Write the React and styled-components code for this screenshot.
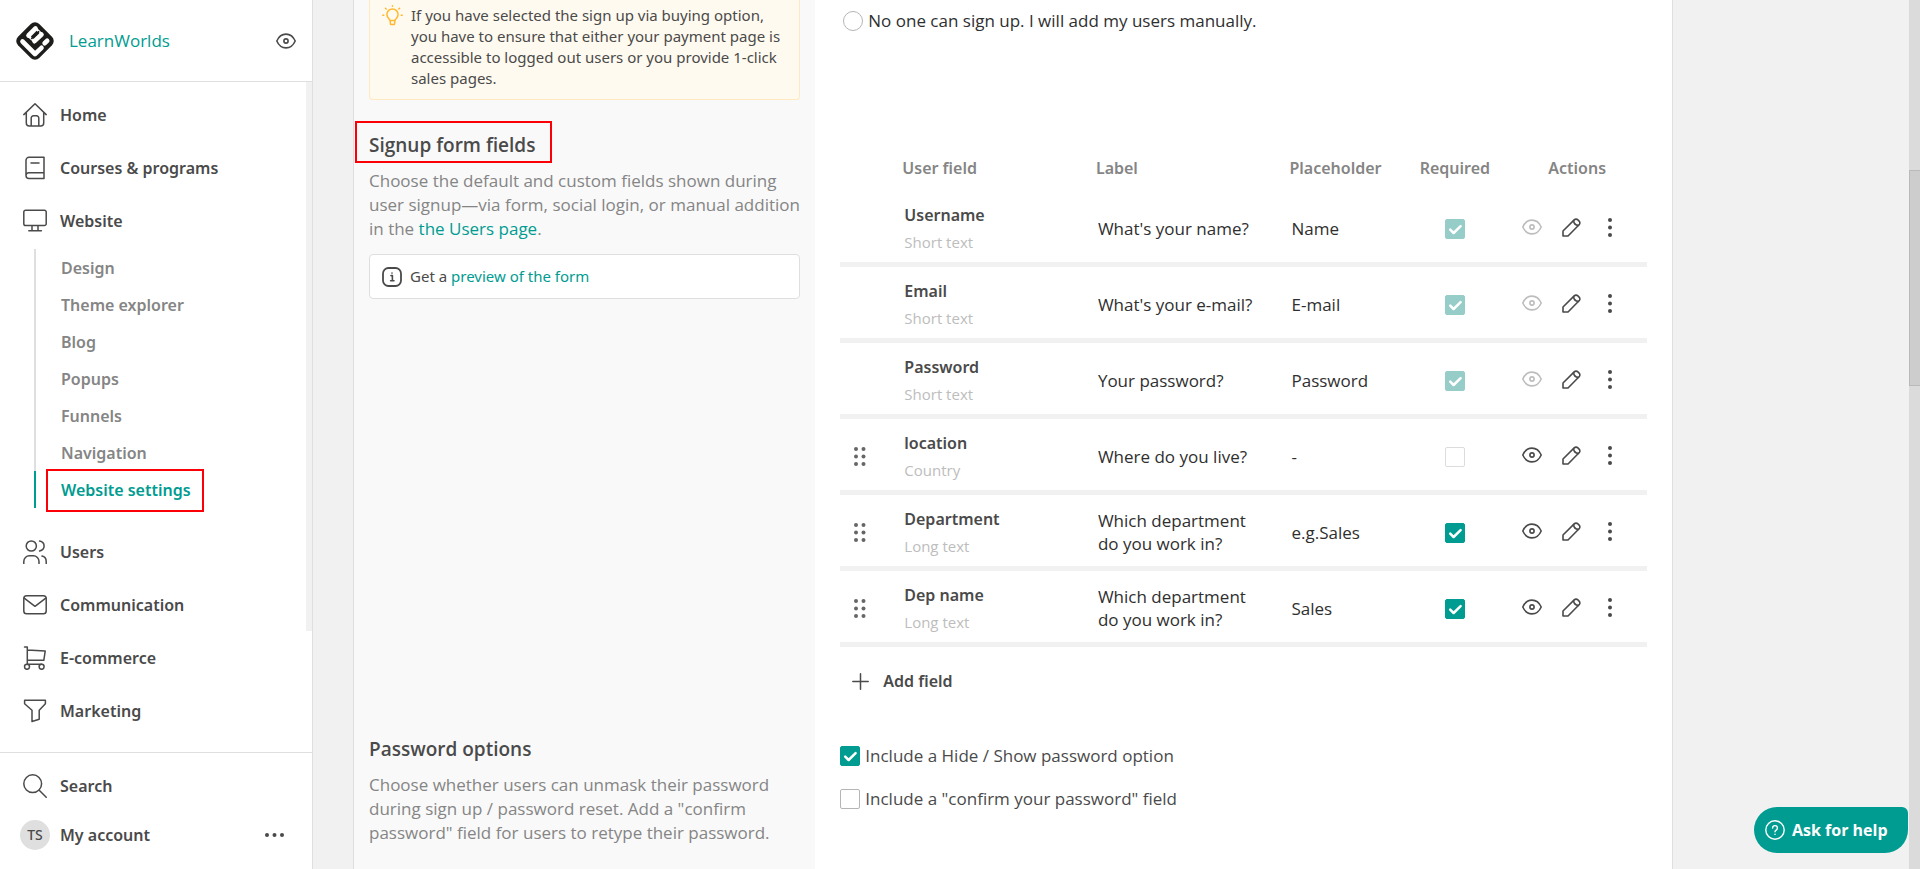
import React from "react";
import styled, { createGlobalStyle, css } from "styled-components";

const teal = "#009c91";
const ink = "#4a4a4a";
const line = "#dfdfdf";
const body = `"Open Sans", "Noto Sans", sans-serif`;
const wide = `"Noto Sans", "Open Sans", sans-serif`;

const Global = createGlobalStyle`
  *, *::before, *::after { box-sizing: border-box; }
  body {
    margin: 0;
    background: #f1f1f1;
    color: ${ink};
    font: 400 17px/24px ${body};
  }
  a { color: ${teal}; text-decoration: none; }
  button { font: inherit; color: inherit; background: none; border: 0; padding: 0; cursor: pointer; }
  h2, p, ul { margin: 0; padding: 0; }
  ul { list-style: none; }
  svg { display: block; flex: none; }
`;

const Shell = styled.div`
  display: flex;
  height: 100vh;
  overflow: hidden;
`;

/* Sidebar */
const Sidebar = styled.aside`
  flex: none;
  display: flex;
  flex-direction: column;
  width: 313px;
  background: #fff;
  border-right: 1px solid ${line};
  font-family: ${wide};
`;
const Brand = styled.header`
  flex: none;
  display: flex;
  align-items: center;
  gap: 14px;
  height: 82px;
  padding: 0 15px;
  border-bottom: 1px solid ${line};
`;
const BrandName = styled.a`
  flex: 1;
  font-family: ${body};
  font-weight: 500;
`;
const Nav = styled.nav`
  position: relative;
  flex: 1;
  min-height: 0;
  overflow: hidden;
  padding-top: 6px;
`;
const NavThumb = styled.span`
  position: absolute;
  top: 0;
  right: 0;
  width: 6px;
  height: 82%;
  background: #f1f1f1;
`;
const NavItem = styled.a`
  display: flex;
  align-items: center;
  gap: 13px;
  height: 53px;
  padding-left: 23px;
  color: ${ink};
  font-weight: 600;
  font-size: 16px;
`;
const SubNav = styled.ul`
  margin: 2px 0 17px 34px;
`;
const SubItem = styled.a`
  display: flex;
  align-items: center;
  height: 37px;
  padding-left: 25px;
  border-left: 2px solid ${(p) => (p.$active ? teal : line)};
  color: ${(p) => (p.$active ? teal : "#858585")};
  font-weight: 600;
  font-size: 16px;
`;
const Highlight = styled.span`
  position: relative;
  &::after {
    content: "";
    position: absolute;
    inset: ${(p) => p.$inset};
    border: 2px solid #fb0007;
    pointer-events: none;
  }
`;
const SideFooter = styled.footer`
  flex: none;
  display: flex;
  flex-direction: column;
  height: 117px;
  padding: 6px 0 12px;
  border-top: 1px solid ${line};
`;
const AccountRow = styled.div`
  display: flex;
  align-items: center;
  justify-content: space-between;
  height: 45px;
  padding: 0 28px 0 20px;
`;
const Account = styled.a`
  display: flex;
  align-items: center;
  gap: 10px;
  color: ${ink};
  font-weight: 600;
  font-size: 16px;
`;
const Avatar = styled.span`
  display: grid;
  place-items: center;
  width: 30px;
  height: 30px;
  border-radius: 50%;
  background: #dfdfdf;
  font-size: 14px;
  font-weight: 500;
`;

/* Content */
const Main = styled.main`
  flex: 1;
  min-width: 0;
  display: flex;
  padding: 0 40px;
`;
const Panel = styled.div`
  flex: 1;
  max-width: 1320px;
  display: flex;
  flex-direction: column;
  background: #fff;
  border: solid ${line};
  border-width: 0 1px;
`;
const Section = styled.section`
  display: flex;
  flex: ${(p) => (p.$last ? "1" : "none")};
`;
const Intro = styled.div`
  flex: none;
  width: 35%;
  padding: 0 15px 30px;
  background: #f9f9f9;
`;
const Body = styled.div`
  flex: 1;
  min-width: 0;
  padding: ${(p) => p.$top || 0}px 25px 0;
`;
const Notice = styled.div`
  display: flex;
  gap: 8px;
  padding: 0 10px 0 12px;
  border-radius: 4px;
  font-family: ${wide};
  font-size: 15px;
  line-height: 21px;
  ${(p) =>
    p.$warn
      ? css`
          padding-top: 5px;
          padding-bottom: 10px;
          background: #fffaf0;
          border: 1px solid #ffe9bf;
          border-top: 0;
          border-radius: 0 0 4px 4px;
        `
      : css`
          align-items: center;
          height: 45px;
          margin-top: 13px;
          background: #fff;
          border: 1px solid ${line};
        `}
`;
const Title = styled.h2`
  font-size: 19px;
  line-height: 30px;
  font-weight: 600;
`;
const Text = styled.p`
  margin-top: 9px;
  color: #858585;
`;

const Choice = styled.label`
  display: flex;
  align-items: center;
  gap: 5px;
  width: max-content;
  height: 24px;
  margin-bottom: 19px;
`;
const RadioChoice = styled(Choice)`
  margin-left: 3px;
  color: #2f2f2f;
`;
const Radio = styled.input`
  appearance: none;
  width: 20px;
  height: 20px;
  margin: 0;
  border: 1px solid #b5b5b5;
  border-radius: 50%;
  background: #fff;
`;
const CheckWrap = styled.span`
  display: inline-grid;
  width: 20px;
  height: 20px;
  > * { grid-area: 1 / 1; }
  > svg { pointer-events: none; z-index: 1; }
`;
const CheckInput = styled.input`
  --fill: ${(p) => (p.disabled ? "#97cdc9" : teal)};
  appearance: none;
  width: 20px;
  height: 20px;
  margin: 0;
  border: 1px solid ${(p) => (p.$pale ? "#dcdcdc" : "#b5b5b5")};
  border-radius: 2px;
  background: #fff;
  &:checked { background: var(--fill); border-color: var(--fill); }
  & + svg { visibility: hidden; }
  &:checked + svg { visibility: visible; }
`;

const Table = styled.table`
  width: 100%;
  table-layout: fixed;
  border-collapse: separate;
  border-spacing: 0;
`;
const Col = styled.col`
  width: ${(p) => p.$w};
`;
const Th = styled.th`
  height: 47px;
  padding: 0;
  text-align: ${(p) => (p.$center ? "center" : "left")};
  color: #858585;
  font-family: ${wide};
  font-weight: 600;
  font-size: 16px;
`;
const Td = styled.td`
  height: 76px;
  padding: ${(p) => (p.$center ? "3px 0 0" : "3px 24px 0 2px")};
  border-bottom: 5px solid #f1f1f1;
  text-align: ${(p) => (p.$center ? "center" : "left")};
  color: #2f2f2f;
  line-height: 23px;
  vertical-align: middle;
`;
const FieldName = styled.div`
  padding-top: 2px;
  color: ${ink};
  font-family: ${wide};
  font-weight: 600;
  font-size: 16px;
  line-height: 27px;
`;
const FieldType = styled.div`
  color: #bdbdbd;
  font-size: 15px;
  line-height: 27px;
`;
const Grip = styled.button`
  display: block;
  margin-left: 12px;
  color: #666;
`;
const CheckCell = styled.div`
  display: flex;
  justify-content: center;
  padding-top: 2px;
`;
const Actions = styled.div`
  display: flex;
  justify-content: center;
  gap: 16px;
  padding: 0 12px 2px 0;
  color: ${ink};
`;
const IconButton = styled.button`
  display: grid;
  place-items: center;
  width: 23px;
  height: 24px;
  color: ${(p) => (p.disabled ? "#bdbdbd" : ink)};
`;
const AddField = styled.button`
  display: flex;
  align-items: center;
  gap: 14px;
  height: 40px;
  margin: 14px 0 33px 12px;
  font-family: ${wide};
  font-weight: 600;
  font-size: 16px;
`;

const Scrollbar = styled.div`
  position: relative;
  flex: none;
  width: 11px;
  background: #dbdbdb;
  &::after {
    content: "";
    position: absolute;
    inset: 170px 0 auto;
    height: 216px;
    background: #cdcdcd;
    border: 1px solid #bababa;
    border-right: 0;
  }
`;
const Help = styled.button`
  position: fixed;
  right: 12px;
  bottom: 16px;
  display: flex;
  align-items: center;
  gap: 7px;
  width: 154px;
  height: 46px;
  padding-left: 11px;
  border-radius: 23px 6px 23px 23px;
  background: ${teal};
  color: #fff;
  font-weight: 700;
  font-size: 16px;
`;

/* Icons */
const Icon = ({ size = 24, w = 1.5, children, box = 24 }) => (
  <svg width={size} height={size} viewBox={`0 0 ${box} ${box}`} fill="none" stroke="currentColor"
    strokeWidth={w} strokeLinejoin="round" strokeLinecap="round" aria-hidden="true">{children}</svg>
);
const Logo = () => (
  <svg width="40" height="40" viewBox="0 0 40 40" fill="none" stroke="#fff" strokeLinecap="round" strokeLinejoin="round" aria-hidden="true">
    <rect x="5" y="5" width="30" height="30" rx="6" transform="rotate(45 20 20)" fill="#1d1d1b" stroke="none" />
    <path d="M7.500 20.500 20 33l6.500-6.200" strokeWidth="4.600" />
    <path d="M20.500 7.500 13.500 14.500M26.500 13.500 19.500 20.200" strokeWidth="4.600" />
    <path d="m21 7.500 6 6M13.500 15l6 5.500" strokeWidth="2.400" />
    <path d="m23.600 10.800-6.800 6.600" stroke="#1d1d1b" strokeWidth="1.800" />
    <path d="m29.600 22.200 2.600-2.400" strokeWidth="4.600" />
  </svg>
);
const Eye = () => (
  <svg width="20" height="16" viewBox="0 0 20 16" fill="none" stroke="currentColor" strokeWidth="1.600" aria-hidden="true">
    <path d="M.8 8C2.800 3.500 6 1.100 10 1.100S17.200 3.500 19.200 8C17.200 12.500 14 14.900 10 14.900S2.800 12.500.8 8Z" strokeLinejoin="round" />
    <circle cx="10" cy="8" r="2.100" />
  </svg>
);
const Pencil = () => (
  <Icon size={19} box={19} w={1.6}>
    <path d="M1 18v-5L12.200 1.900a2.600 2.600 0 0 1 3.700 0l1.200 1.200a2.600 2.600 0 0 1 0 3.700L6 18Z" />
    <path d="M11.600 2.600c.2 2.800 1.900 4.500 4.800 4.800" />
  </Icon>
);
const Dots = ({ points, width, height, r = 2 }) => (
  <svg width={width} height={height} fill="currentColor" aria-hidden="true">
    {points.map(([x, y]) => <circle key={`${x}-${y}`} cx={x} cy={y} r={r} />)}
  </svg>
);
const kebab = [[3, 2], [3, 9.5], [3, 17]];
const grip = [[4, 3], [11.5, 3], [4, 10.5], [11.5, 10.5], [4, 18], [11.5, 18]];
const meatballs = [[2, 2], [9.5, 2], [17, 2]];

const icons = {
  home: <Icon><path d="M.8 11.600 12 .8l11.200 10.800M3.300 9.400V20a3 3 0 0 0 3 3h11.400a3 3 0 0 0 3-3V9.400M8.200 23v-8a2.200 2.200 0 0 1 2.200-2.200h3.200a2.200 2.200 0 0 1 2.200 2.200v8" /></Icon>,
  courses: <Icon><path d="M21 1.300H6a3 3 0 0 0-3 3v15.200a3 3 0 0 0 3 3h15ZM3 19.500a2.800 2.800 0 0 1 3-2.700h15M8 7h8" /></Icon>,
  website: <Icon><path d="M2.600 1.300h18.800a1.800 1.800 0 0 1 1.800 1.800v11.600a1.800 1.800 0 0 1-1.800 1.800H2.600a1.800 1.800 0 0 1-1.800-1.800V3.100a1.800 1.800 0 0 1 1.800-1.800ZM9 16.500v4.800M15 16.500v4.800M5.800 21.800h12.600" /></Icon>,
  users: <Icon><circle cx="8.300" cy="6" r="5.100" /><path d="M.8 23.600v-2.200a5.600 5.600 0 0 1 5.600-5.600h4a5.600 5.600 0 0 1 5.600 5.600v2.200M16.600 1.100c6 1.400 6 8.400 0 9.900M19 16.100a5.500 5.500 0 0 1 4.200 5.300v2.200" /></Icon>,
  mail: <Icon><rect x=".8" y="2.800" width="22.400" height="18" rx="2.800" /><path d="M1.200 5.200 12 13.300l10.800-8.100" /></Icon>,
  cart: <Icon><path d="M1.500 1h2.800v17.200M4.300 3.900l17.900 1.200-1.400 9.200H4.300M4.300 18.200h14.500" /><circle cx="4" cy="20.800" r="2.500" /><circle cx="18.600" cy="20.800" r="2.500" /></Icon>,
  funnel: <Icon><path d="M1.600 1.300h20.800v3.400l-6.200 6.500v9l-7.200 2.300V11.200L1.600 4.700Z" /></Icon>,
  card: <Icon><rect x="3" y=".7" width="18" height="22" rx="2" /></Icon>,
  search: <Icon><circle cx="9.700" cy="9.700" r="8.900" /><path d="m16.200 16.200 7 7" /></Icon>,
};

const Check = ({ pale, ...rest }) => (
  <CheckWrap>
    <CheckInput type="checkbox" $pale={pale} {...rest} />
    <svg width="20" height="20" viewBox="0 0 20 20" fill="none" stroke="#fff" strokeWidth="2.500" strokeLinecap="round" strokeLinejoin="round" aria-hidden="true">
      <path d="m5.200 10.700 3.400 3.300 7-6.800" />
    </svg>
  </CheckWrap>
);

const topItems = [["Home", "home"], ["Courses & programs", "courses"], ["Website", "website"]];
const subItems = ["Design", "Theme explorer", "Blog", "Popups", "Funnels", "Navigation", "Website settings"];
const lowerItems = [["Users", "users"], ["Communication", "mail"], ["E-commerce", "cart"], ["Marketing", "funnel"], ["", "card"]];
const fields = [
  { name: "Username", type: "Short text", label: "What's your name?", placeholder: "Name", checked: true, locked: true },
  { name: "Email", type: "Short text", label: "What's your e-mail?", placeholder: "E-mail", checked: true, locked: true },
  { name: "Password", type: "Short text", label: "Your password?", placeholder: "Password", checked: true, locked: true },
  { name: "location", type: "Country", label: "Where do you live?", placeholder: "-", checked: false },
  { name: "Department", type: "Long text", label: "Which department do you work in?", placeholder: "e.g.Sales", checked: true },
  { name: "Dep name", type: "Long text", label: "Which department do you work in?", placeholder: "Sales", checked: true },
];

const FieldRow = ({ field: f }) => (
  <tr>
    <Td $center>
      {!f.locked && <Grip type="button" aria-label={`Move ${f.name}`}><Dots points={grip} width={16} height={21} /></Grip>}
    </Td>
    <Td><FieldName>{f.name}</FieldName><FieldType>{f.type}</FieldType></Td>
    <Td>{f.label}</Td>
    <Td>{f.placeholder}</Td>
    <Td $center>
      <CheckCell>
        <Check aria-label={`${f.name} required`} defaultChecked={f.checked} disabled={f.locked} pale />
      </CheckCell>
    </Td>
    <Td $center>
      <Actions>
        <IconButton type="button" disabled={f.locked} aria-label={`Show ${f.name}`}><Eye /></IconButton>
        <IconButton type="button" aria-label={`Edit ${f.name}`}><Pencil /></IconButton>
        <IconButton type="button" aria-label={`More for ${f.name}`}><Dots points={kebab} width={6} height={19} /></IconButton>
      </Actions>
    </Td>
  </tr>
);

export default function App() {
  return (
    <>
      <Global />
      <Shell>
        <Sidebar>
          <Brand>
            <Logo />
            <BrandName href="#">LearnWorlds</BrandName>
            <IconButton type="button" aria-label="Preview site"><Eye /></IconButton>
          </Brand>
          <Nav>
            {topItems.map(([t, i]) => <NavItem key={t} href="#">{icons[i]}{t}</NavItem>)}
            <SubNav>
              {subItems.map((t) => {
                const active = t === "Website settings";
                return (
                  <li key={t}>
                    <SubItem href="#" $active={active}>
                      {active ? <Highlight $inset="-9px -13px -10px -15px">{t}</Highlight> : t}
                    </SubItem>
                  </li>
                );
              })}
            </SubNav>
            {lowerItems.map(([t, i]) => <NavItem key={i} href="#" aria-label={t || "More"}>{icons[i]}{t}</NavItem>)}
            <NavThumb />
          </Nav>
          <SideFooter>
            <NavItem href="#">{icons.search}Search</NavItem>
            <AccountRow>
              <Account href="#"><Avatar>TS</Avatar>My account</Account>
              <button type="button" aria-label="Account menu"><Dots points={meatballs} width={19} height={4} /></button>
            </AccountRow>
          </SideFooter>
        </Sidebar>

        <Main>
          <Panel>
            <Section>
              <Intro>
                <Notice $warn>
                  <Icon size={21} box={21}>
                    <g stroke="#ffb92e">
                      <path d="M8 15.600c0-1.600-3.100-2.600-3.100-6A5.600 5.600 0 0 1 10.500 4a5.600 5.600 0 0 1 5.600 5.600c0 3.400-3.100 4.400-3.100 6ZM8 15.600l.6 3.900h3.800l.6-3.900M10.500.8v.4M3.400 3.200l.8.8M17.600 3.200l-.8.800M.8 10.200h1M19.200 10.200h1" />
                    </g>
                  </Icon>
                  <p>If you have selected the sign up via buying option, you have to ensure that either your payment page is accessible to logged out users or you provide 1-click sales pages.</p>
                </Notice>
              </Intro>
              <Body $top={9}>
                <RadioChoice>
                  <Radio type="radio" name="signup" />
                  No one can sign up. I will add my users manually.
                </RadioChoice>
              </Body>
            </Section>

            <Section>
              <Intro>
                <Title><Highlight $inset="-11px -17px -5px -14px">Signup form fields</Highlight></Title>
                <Text>
                  Choose the default and custom fields shown during user signup—via form, social login, or manual addition in the <a href="#">the Users page</a>.
                </Text>
                <Notice>
                  <Icon size={20} box={20} w={1.8}>
                    <rect x="1" y="1" width="18" height="18" rx="5.500" />
                    <path d="M9 8.600h1.400v5M8.600 13.800h3.400M10 6v.1" strokeWidth="1.600" />
                  </Icon>
                  <p>Get a <a href="#">preview of the form</a></p>
                </Notice>
              </Intro>
              <Body $top={14}>
                <Table>
                  <colgroup>
                    <Col $w="62px" /><Col $w="24%" /><Col $w="24%" /><Col $w="14%" /><Col $w="13%" /><Col />
                  </colgroup>
                  <thead>
                    <tr>
                      <Th aria-label="Order" /><Th>User field</Th><Th>Label</Th><Th>Placeholder</Th><Th $center>Required</Th><Th $center>Actions</Th>
                    </tr>
                  </thead>
                  <tbody>{fields.map((f) => <FieldRow key={f.name} field={f} />)}</tbody>
                </Table>
                <AddField type="button">
                  <Icon size={17} box={17}><path d="M8.500.8v15.400M.8 8.500h15.400" /></Icon>
                  Add field
                </AddField>
              </Body>
            </Section>

            <Section $last>
              <Intro>
                <Title>Password options</Title>
                <Text>
                  Choose whether users can unmask their password during sign up / password reset. Add a "confirm password" field for users to retype their password.
                </Text>
              </Intro>
              <Body $top={10}>
                <Choice><Check defaultChecked />Include a Hide / Show password option</Choice>
                <Choice><Check />Include a "confirm your password" field</Choice>
              </Body>
            </Section>
          </Panel>
        </Main>
        <Scrollbar />
      </Shell>
      <Help type="button">
        <Icon size={20} box={20} w={1.4}>
          <circle cx="10" cy="10" r="9.200" />
          <path d="M7.600 8a2.400 2.400 0 1 1 3.600 2.100c-.8.500-1.200.8-1.200 1.700M10 14.300v.1" />
        </Icon>
        Ask for help
      </Help>
    </>
  );
}
